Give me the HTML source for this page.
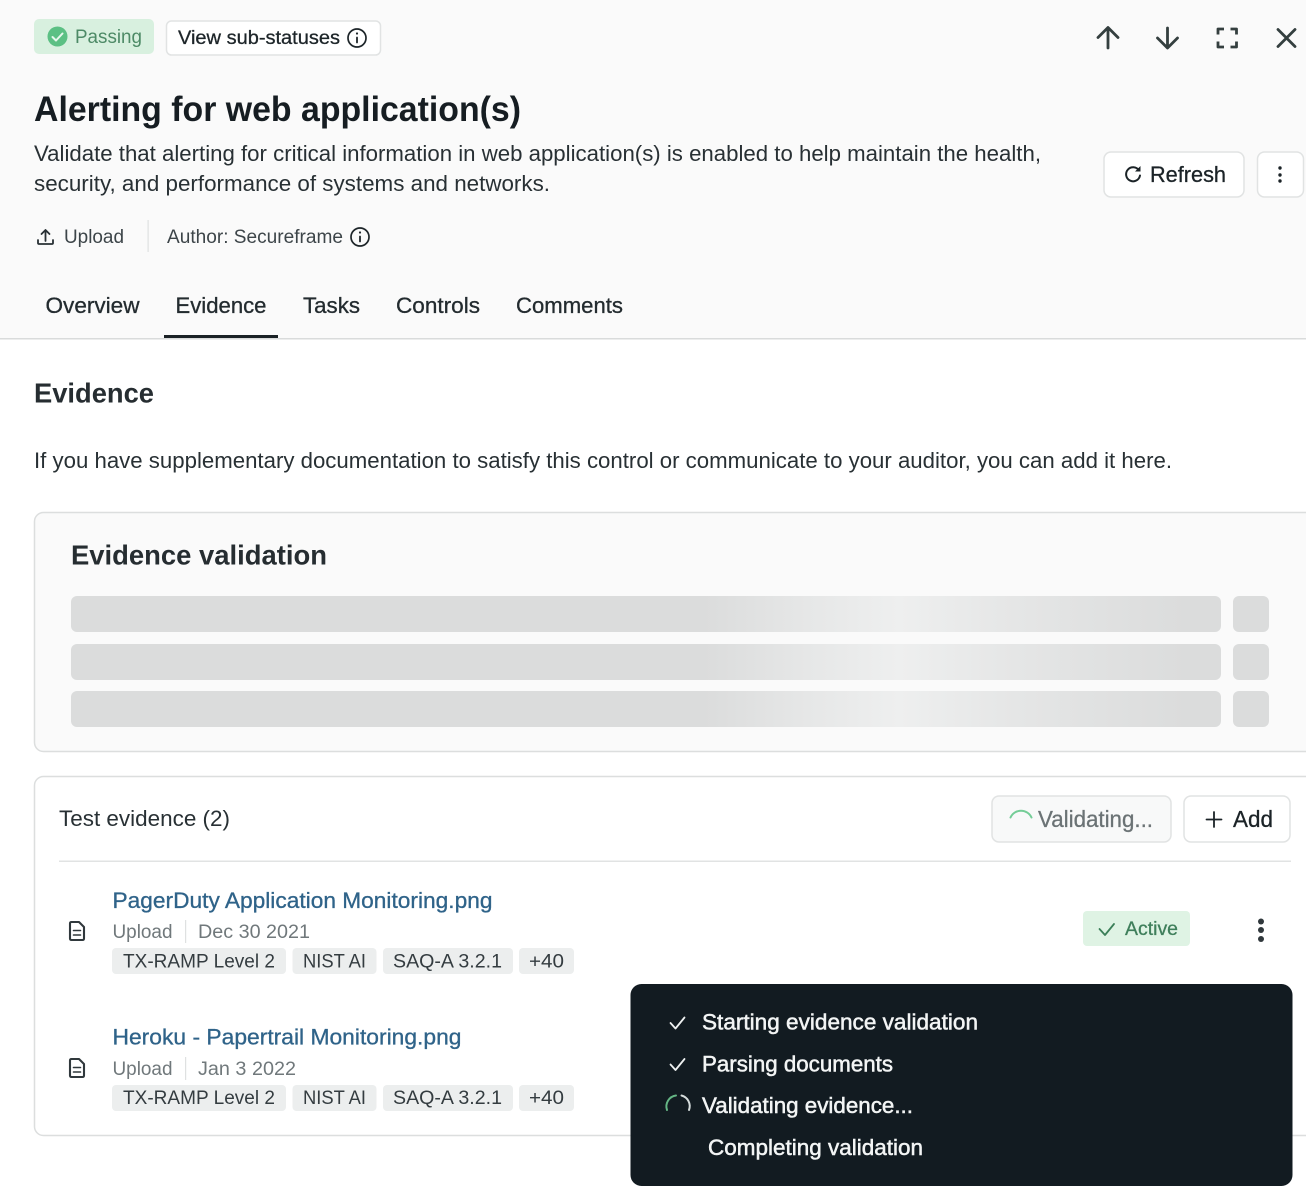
<!DOCTYPE html>
<html><head><meta charset="utf-8"><title>Evidence</title>
<style>
html,body{margin:0;padding:0;background:#fff;width:1306px;height:1202px;overflow:hidden}
svg{display:block;font-family:"Liberation Sans",sans-serif;filter:blur(.35px)}
text{white-space:pre}
.ic{fill:none;stroke-linecap:round;stroke-linejoin:round}
.m{stroke:currentColor;stroke-width:.3px}
</style></head><body>
<svg width="1306" height="1202" viewBox="0 0 1306 1202" xmlns="http://www.w3.org/2000/svg">
<defs>
<linearGradient id="sk" x1="0" x2="1" y1="0" y2="0">
<stop offset="0" stop-color="#dbdcdc"/><stop offset=".55" stop-color="#dbdcdc"/><stop offset=".64" stop-color="#e6e7e7"/><stop offset=".72" stop-color="#eeefef"/><stop offset=".82" stop-color="#e5e6e6"/><stop offset=".97" stop-color="#dbdcdc"/><stop offset="1" stop-color="#dbdcdc"/>
</linearGradient>
</defs>
<rect width="1306" height="1202" fill="#fff"/>
<rect width="1306" height="338" fill="#fafafa"/>
<rect y="338" width="1306" height="1.500" fill="#d9dbdb"/>

<!-- status -->
<rect x="34" y="19" width="120" height="35" rx="5" fill="#d8f0df"/>
<circle cx="57.500" cy="36.500" r="10" fill="#5cc084"/>
<path class="ic" d="M52.500 37l3.500 3.500 6.500-7" stroke="#e8f7ed" stroke-width="2"/>
<text x="75" y="43" font-size="19" fill="#4d8a66" textLength="67" lengthAdjust="spacingAndGlyphs">Passing</text>
<rect x="166.500" y="21" width="214" height="34" rx="5" fill="#fff" stroke="#e1e3e3" stroke-width="1.500"/>
<text x="178" y="44" font-size="19" fill="#1d2529" color="#1d2529" class="m" textLength="162" lengthAdjust="spacingAndGlyphs">View sub-statuses</text>
<circle class="ic" cx="357" cy="38" r="9" stroke="#1d2529" stroke-width="1.700"/>
<path class="ic" d="M357 37.500v5" stroke="#1d2529" stroke-width="1.800"/><circle cx="357" cy="33.500" r="1.100" fill="#1d2529"/>

<!-- top icons -->
<g class="ic" stroke="#343f3f" stroke-width="2.800">
<path d="M1108 48V28M1098 37.500l10-10 10 10"/>
<path d="M1167.500 28v20M1157.500 38l10 10 10-10"/>
<path d="M1218 34.500V29h6M1230.500 29h6v5.500M1236.500 41.500V47h-6M1224 47h-6v-5.500" stroke-linecap="butt"/>
<path d="M1278 29.500l17 17M1295 29.500l-17 17"/>
</g>

<!-- title -->
<text x="34" y="121" font-size="35" font-weight="700" fill="#161d22" textLength="487" lengthAdjust="spacingAndGlyphs">Alerting for web application(s)</text>
<text x="34" y="161" font-size="22" fill="#283034" textLength="1007" lengthAdjust="spacingAndGlyphs">Validate that alerting for critical information in web application(s) is enabled to help maintain the health,</text>
<text x="34" y="191" font-size="22" fill="#283034" textLength="516" lengthAdjust="spacingAndGlyphs">security, and performance of systems and networks.</text>

<!-- refresh -->
<rect x="1104" y="152" width="140" height="45" rx="7" fill="#fff" stroke="#e1e3e3" stroke-width="1.500"/>
<text x="1150" y="182" font-size="22.500" fill="#1b2327" color="#1b2327" class="m" textLength="76" lengthAdjust="spacingAndGlyphs">Refresh</text>
<path class="ic" d="M1139 170.500a7 7 0 1 0 1 5" stroke="#1b2327" stroke-width="2"/>
<path d="M1135 171.500h5.500v-5.500z" fill="#1b2327"/>
<rect x="1257.500" y="152" width="46" height="45" rx="7" fill="#fff" stroke="#e1e3e3" stroke-width="1.500"/>
<circle cx="1280" cy="168" r="1.700" fill="#1b2327"/><circle cx="1280" cy="175" r="1.700" fill="#1b2327"/><circle cx="1280" cy="181" r="1.700" fill="#1b2327"/>

<!-- upload row -->
<g class="ic" stroke="#283034" stroke-width="1.800">
<path d="M45.500 241v-10.500M41.500 234l4-4 4 4"/>
<path d="M38 240v3q0 1 1 1h13q1 0 1-1v-3"/>
</g>
<text x="64" y="243" font-size="19" fill="#3d4549" textLength="60" lengthAdjust="spacingAndGlyphs">Upload</text>
<rect x="147.500" y="220" width="1.200" height="32" fill="#dfe1e1"/>
<text x="167" y="243" font-size="19" fill="#3d4549" textLength="176" lengthAdjust="spacingAndGlyphs">Author: Secureframe</text>
<circle class="ic" cx="360" cy="237" r="9" stroke="#1d2529" stroke-width="1.700"/>
<path class="ic" d="M360 236.500v5" stroke="#1d2529" stroke-width="1.800"/><circle cx="360" cy="232.500" r="1.100" fill="#1d2529"/>

<!-- tabs -->
<g font-size="22" fill="#232b2f" color="#232b2f">
<text class="m" x="45.500" y="313" textLength="94" lengthAdjust="spacingAndGlyphs">Overview</text>
<text class="m" x="175.500" y="313" textLength="91" lengthAdjust="spacingAndGlyphs">Evidence</text>
<text class="m" x="303" y="313" textLength="57" lengthAdjust="spacingAndGlyphs">Tasks</text>
<text class="m" x="396" y="313" textLength="84" lengthAdjust="spacingAndGlyphs">Controls</text>
<text class="m" x="516" y="313" textLength="107" lengthAdjust="spacingAndGlyphs">Comments</text>
</g>
<rect x="164" y="335" width="114" height="3" fill="#1a2125"/>

<!-- evidence section -->
<text x="34" y="402.500" font-size="27.500" font-weight="700" fill="#262d31" textLength="120" lengthAdjust="spacingAndGlyphs">Evidence</text>
<text x="34" y="468" font-size="22" fill="#283034" textLength="1138" lengthAdjust="spacingAndGlyphs">If you have supplementary documentation to satisfy this control or communicate to your auditor, you can add it here.</text>

<!-- validation card -->
<rect x="34.500" y="512.500" width="1300" height="239" rx="9" fill="#fafafa" stroke="#dcdede" stroke-width="1.500"/>
<text x="71" y="564.500" font-size="27.500" font-weight="700" fill="#262d31" textLength="256" lengthAdjust="spacingAndGlyphs">Evidence validation</text>
<rect x="71" y="596" width="1150" height="36" rx="6" fill="url(#sk)"/>
<rect x="71" y="644" width="1150" height="36" rx="6" fill="url(#sk)"/>
<rect x="71" y="691" width="1150" height="36" rx="6" fill="url(#sk)"/>
<rect x="1233" y="596" width="36" height="36" rx="6" fill="#dbdcdc"/>
<rect x="1233" y="644" width="36" height="36" rx="6" fill="#dbdcdc"/>
<rect x="1233" y="691" width="36" height="36" rx="6" fill="#dbdcdc"/>

<!-- test evidence card -->
<rect x="34.500" y="776.500" width="1300" height="359" rx="9" fill="#fff" stroke="#dcdede" stroke-width="1.500"/>
<text x="59" y="826" font-size="22" fill="#283034" textLength="171" lengthAdjust="spacingAndGlyphs">Test evidence (2)</text>
<rect x="992" y="796" width="179" height="46" rx="7" fill="#f8f9f9" stroke="#e1e3e3" stroke-width="1.500"/>
<path class="ic" d="M1010.500 817.500a11.500 11.500 0 0 1 21 0" stroke="#74cd97" stroke-width="2"/>
<text x="1038" y="827" font-size="23" fill="#6b7375" color="#6b7375" class="m" textLength="115" lengthAdjust="spacingAndGlyphs">Validating...</text>
<rect x="1184" y="796" width="106" height="46" rx="7" fill="#fff" stroke="#e1e3e3" stroke-width="1.500"/>
<path class="ic" d="M1206.500 819.500h15M1214 812v15" stroke="#1b2327" stroke-width="1.800"/>
<text x="1233" y="827" font-size="23" fill="#1b2327" color="#1b2327" class="m" textLength="40" lengthAdjust="spacingAndGlyphs">Add</text>
<rect x="59" y="860.500" width="1232" height="1.500" fill="#e1e3e3"/>

<!-- row 1 -->
<g class="ic" stroke="#30383c" stroke-width="2.100">
<path d="M70 923.500q0-1.500 1.500-1.500h7.500l5 5v11.500q0 1.500-1.500 1.500h-11q-1.500 0-1.500-1.500z"/>
<path d="M73.500 930.500h7M73.500 935h7" stroke-width="1.600"/>
</g>
<text x="112.500" y="908" font-size="22" fill="#2f6389" color="#2f6389" class="m" textLength="380" lengthAdjust="spacingAndGlyphs">PagerDuty Application Monitoring.png</text>
<text x="112.500" y="938" font-size="19" fill="#70787b" textLength="60" lengthAdjust="spacingAndGlyphs">Upload</text>
<rect x="185" y="920" width="1.200" height="23" fill="#dfe1e1"/>
<text x="198" y="938" font-size="19" fill="#70787b" textLength="112" lengthAdjust="spacingAndGlyphs">Dec 30 2021</text>
<g fill="#eceeee">
<rect x="112" y="948" width="174" height="26" rx="4"/><rect x="292.500" y="948" width="84" height="26" rx="4"/><rect x="383" y="948" width="130" height="26" rx="4"/><rect x="519" y="948" width="55" height="26" rx="4"/>
</g>
<g font-size="19" fill="#343c40">
<text x="123" y="967.500" textLength="152" lengthAdjust="spacingAndGlyphs">TX-RAMP Level 2</text>
<text x="303" y="967.500" textLength="63" lengthAdjust="spacingAndGlyphs">NIST AI</text>
<text x="393" y="967.500" textLength="109" lengthAdjust="spacingAndGlyphs">SAQ-A 3.2.1</text>
<text x="529" y="967.500" textLength="35" lengthAdjust="spacingAndGlyphs">+40</text>
</g>
<rect x="1083" y="911" width="107" height="35" rx="4" fill="#dff3e4"/>
<path class="ic" d="M1099.500 929l5.500 6 9-11" stroke="#3b7f58" stroke-width="1.800"/>
<text x="1125" y="935" font-size="19" fill="#3f7f5b" color="#3f7f5b" class="m" textLength="53" lengthAdjust="spacingAndGlyphs">Active</text>
<circle cx="1261" cy="921.500" r="3" fill="#30383c"/><circle cx="1261" cy="930" r="3" fill="#30383c"/><circle cx="1261" cy="939" r="3" fill="#30383c"/>

<!-- row 2 -->
<g class="ic" stroke="#30383c" stroke-width="2.100">
<path d="M70 1060.500q0-1.500 1.500-1.500h7.500l5 5v11.500q0 1.500-1.500 1.500h-11q-1.500 0-1.500-1.500z"/>
<path d="M73.500 1067.500h7M73.500 1072h7" stroke-width="1.600"/>
</g>
<text x="112.500" y="1044.500" font-size="22" fill="#2f6389" color="#2f6389" class="m" textLength="349" lengthAdjust="spacingAndGlyphs">Heroku - Papertrail Monitoring.png</text>
<text x="112.500" y="1075" font-size="19" fill="#70787b" textLength="60" lengthAdjust="spacingAndGlyphs">Upload</text>
<rect x="185" y="1057" width="1.200" height="23" fill="#dfe1e1"/>
<text x="198" y="1075" font-size="19" fill="#70787b" textLength="98" lengthAdjust="spacingAndGlyphs">Jan 3 2022</text>
<g fill="#eceeee">
<rect x="112" y="1085" width="174" height="26" rx="4"/><rect x="292.500" y="1085" width="84" height="26" rx="4"/><rect x="383" y="1085" width="130" height="26" rx="4"/><rect x="519" y="1085" width="55" height="26" rx="4"/>
</g>
<g font-size="19" fill="#343c40">
<text x="123" y="1104" textLength="152" lengthAdjust="spacingAndGlyphs">TX-RAMP Level 2</text>
<text x="303" y="1104" textLength="63" lengthAdjust="spacingAndGlyphs">NIST AI</text>
<text x="393" y="1104" textLength="109" lengthAdjust="spacingAndGlyphs">SAQ-A 3.2.1</text>
<text x="529" y="1104" textLength="35" lengthAdjust="spacingAndGlyphs">+40</text>
</g>

<!-- toast -->
<rect x="630.500" y="984" width="662" height="202" rx="11" fill="#121b21"/>
<g class="ic" stroke="#eef1f1" stroke-width="1.800">
<path d="M670.500 1023l5 5.500 9-11"/>
<path d="M670.500 1064.500l5 5.500 9-11"/>
</g>
<path class="ic" d="M667 1110a11 11 0 0 1 9-14.500" stroke="#65b685" stroke-width="2"/>
<path class="ic" d="M681.500 1095.500a11 11 0 0 1 7.500 14.500" stroke="#d5dcdc" stroke-width="2"/>
<g font-size="22" fill="#f3f5f5" color="#f3f5f5">
<text class="m" style="stroke-width:.5px" x="702" y="1029.500" textLength="276" lengthAdjust="spacingAndGlyphs">Starting evidence validation</text>
<text class="m" style="stroke-width:.5px" x="702" y="1071.500" textLength="191" lengthAdjust="spacingAndGlyphs">Parsing documents</text>
<text class="m" style="stroke-width:.5px" x="702" y="1113" textLength="211" lengthAdjust="spacingAndGlyphs">Validating evidence...</text>
<text class="m" style="stroke-width:.5px" x="708" y="1155" textLength="215" lengthAdjust="spacingAndGlyphs">Completing validation</text>
</g>
</svg>
</body></html>
